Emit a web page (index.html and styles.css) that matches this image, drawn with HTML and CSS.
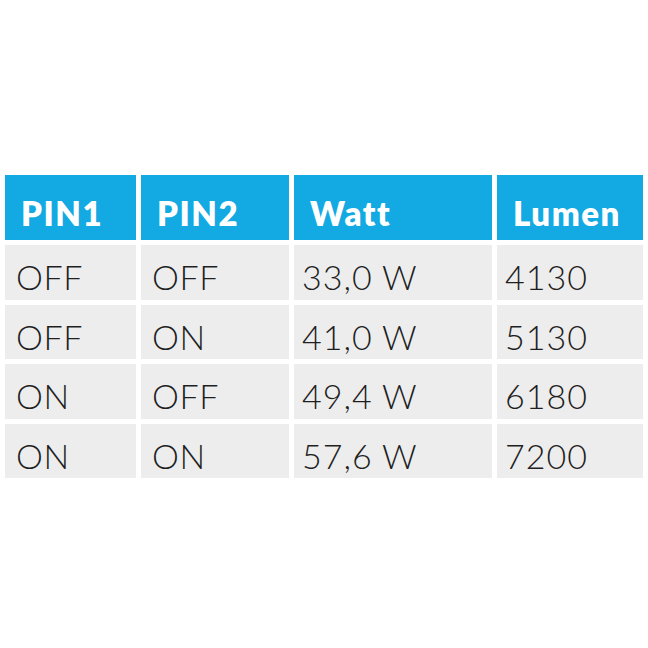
FILE: index.html
```html
<!DOCTYPE html>
<html>
<head>
<meta charset="utf-8">
<link rel="stylesheet" href="styles.css">
</head>
<body>
<div class="page">
  <div class="table">
    <div class="cell head">PIN1</div>
    <div class="cell head">PIN2</div>
    <div class="cell head">Watt</div>
    <div class="cell head">Lumen</div>

    <div class="cell">OFF</div>
    <div class="cell">OFF</div>
    <div class="cell num">33,0 W</div>
    <div class="cell num">4130</div>

    <div class="cell">OFF</div>
    <div class="cell">ON</div>
    <div class="cell num">41,0 W</div>
    <div class="cell num">5130</div>

    <div class="cell">ON</div>
    <div class="cell">OFF</div>
    <div class="cell num">49,4 W</div>
    <div class="cell num">6180</div>

    <div class="cell">ON</div>
    <div class="cell">ON</div>
    <div class="cell num">57,6 W</div>
    <div class="cell num">7200</div>
  </div>
</div>
</body>
</html>
```

FILE: styles.css
```css
html, body {
  margin: 0;
  padding: 0;
  background: #ffffff;
}
.page {
  width: 648px;
  height: 648px;
  padding-top: 175px;
  padding-left: 5px;
  box-sizing: border-box;
}
.table {
  display: grid;
  grid-template-columns: 131px 148px 198px 146px;
  grid-template-rows: 65px repeat(4, 54.5px);
  column-gap: 5px;
  row-gap: 5px;
}
.cell {
  background: #ededed;
  color: #1f1f1f;
  font-family: "Lato", "Liberation Sans", sans-serif;
  font-weight: 300;
  font-size: 34px;
  letter-spacing: 0.6px;
  display: flex;
  align-items: center;
  padding: 10px 0 0 11px;
  box-sizing: border-box;
  line-height: 1;
}
.cell.num {
  padding-left: 8px;
  letter-spacing: 1px;
}
.cell.head {
  background: #13a9e2;
  color: #ffffff;
  font-weight: 800;
  font-size: 33px;
  letter-spacing: 1.5px;
  padding: 12px 0 0 16px;
}
```
